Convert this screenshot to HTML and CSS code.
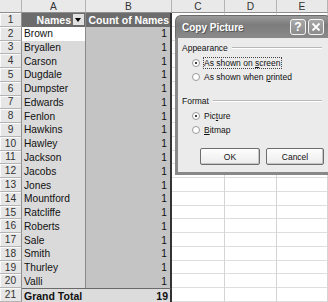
FILE: index.html
```
<!DOCTYPE html>
<html lang="en">
<head>
  <meta charset="UTF-8">
  <title>Copy Picture</title>
  <link rel="stylesheet" href="styles.css">
</head>
<body>
  <div class="sheet">
    <div class="hd"></div><div class="hd">A</div><div class="hd">B</div><div class="hd">C</div><div class="hd">D</div><div class="hd">E</div>

    <div class="rh">1</div>
    <div class="ph ph-a">Names <span class="drop"></span></div>
    <div class="ph ph-b">Count of Names</div>
    <div class="c"></div><div class="c"></div><div class="c"></div>

    <div class="rh">2</div><div class="ca sel">Brown</div><div class="cb">1</div><div class="c"></div><div class="c"></div><div class="c"></div>
    <div class="rh">3</div><div class="ca">Bryallen</div><div class="cb">1</div><div class="c"></div><div class="c"></div><div class="c"></div>
    <div class="rh">4</div><div class="ca">Carson</div><div class="cb">1</div><div class="c"></div><div class="c"></div><div class="c"></div>
    <div class="rh">5</div><div class="ca">Dugdale</div><div class="cb">1</div><div class="c"></div><div class="c"></div><div class="c"></div>
    <div class="rh">6</div><div class="ca">Dumpster</div><div class="cb">1</div><div class="c"></div><div class="c"></div><div class="c"></div>
    <div class="rh">7</div><div class="ca">Edwards</div><div class="cb">1</div><div class="c"></div><div class="c"></div><div class="c"></div>
    <div class="rh">8</div><div class="ca">Fenlon</div><div class="cb">1</div><div class="c"></div><div class="c"></div><div class="c"></div>
    <div class="rh">9</div><div class="ca">Hawkins</div><div class="cb">1</div><div class="c"></div><div class="c"></div><div class="c"></div>
    <div class="rh">10</div><div class="ca">Hawley</div><div class="cb">1</div><div class="c"></div><div class="c"></div><div class="c"></div>
    <div class="rh">11</div><div class="ca">Jackson</div><div class="cb">1</div><div class="c"></div><div class="c"></div><div class="c"></div>
    <div class="rh">12</div><div class="ca">Jacobs</div><div class="cb">1</div><div class="c"></div><div class="c"></div><div class="c"></div>
    <div class="rh">13</div><div class="ca">Jones</div><div class="cb">1</div><div class="c"></div><div class="c"></div><div class="c"></div>
    <div class="rh">14</div><div class="ca">Mountford</div><div class="cb">1</div><div class="c"></div><div class="c"></div><div class="c"></div>
    <div class="rh">15</div><div class="ca">Ratcliffe</div><div class="cb">1</div><div class="c"></div><div class="c"></div><div class="c"></div>
    <div class="rh">16</div><div class="ca">Roberts</div><div class="cb">1</div><div class="c"></div><div class="c"></div><div class="c"></div>
    <div class="rh">17</div><div class="ca">Sale</div><div class="cb">1</div><div class="c"></div><div class="c"></div><div class="c"></div>
    <div class="rh">18</div><div class="ca">Smith</div><div class="cb">1</div><div class="c"></div><div class="c"></div><div class="c"></div>
    <div class="rh">19</div><div class="ca">Thurley</div><div class="cb">1</div><div class="c"></div><div class="c"></div><div class="c"></div>
    <div class="rh">20</div><div class="ca">Valli</div><div class="cb">1</div><div class="c"></div><div class="c"></div><div class="c"></div>

    <div class="rh">21</div>
    <div class="gt gt-a">Grand Total</div>
    <div class="gt gt-b">19</div>
    <div class="c"></div><div class="c"></div><div class="c"></div>
  </div>

  <div class="dlg">
    <div class="titlebar">
      <span class="title">Copy Picture</span>
      <span class="tbtn">?</span>
      <span class="tbtn">
        <svg width="10" height="10" viewBox="0 0 10 10"><path d="M1.5 1.5 L8.5 8.5 M8.5 1.5 L1.5 8.5" stroke="#fff" stroke-width="1.8"/></svg>
      </span>
    </div>
    <div class="dlg-body">
      <div class="group"><span>Appearance</span></div>
      <div class="radio on"><i></i><span class="focus">As shown on <u>s</u>creen</span></div>
      <div class="radio"><i></i><span>As shown when <u>p</u>rinted</span></div>

      <div class="group group-2"><span>Format</span></div>
      <div class="radio on"><i></i><span>Pic<u>t</u>ure</span></div>
      <div class="radio"><i></i><span><u>B</u>itmap</span></div>

      <div class="buttons">
        <button class="btn btn-ok">OK</button>
        <button class="btn btn-cancel">Cancel</button>
      </div>
    </div>
  </div>
</body>
</html>
```

FILE: styles.css
```
body {
  margin: 0;
  width: 328px;
  height: 302px;
  overflow: hidden;
  background: #fff;
  font-family: "Liberation Sans", Arial, sans-serif;
  position: relative;
}
.sheet {
  display: grid;
  grid-template-columns: 22px 64px 86px 53px 52px 51px;
  grid-template-rows: 13px repeat(21, 1fr);
  height: 302px;
  font-size: 10.2px;
  color: #111;
}
.sheet > div {
  box-sizing: border-box;
  display: flex;
  align-items: center;
  white-space: nowrap;
  overflow: hidden;
}
.hd {
  background: #e9e9e9;
  border-right: 1px solid #b4b4b4;
  border-bottom: 1px solid #8e8e8e;
  justify-content: center;
  color: #333;
}
.rh {
  background: #e6e6e6;
  border-right: 1px solid #8e8e8e;
  border-bottom: 1px solid #b4b4b4;
  box-shadow: inset 1px 1px #fafafa;
  justify-content: center;
  color: #333;
}
.ca {
  background: #dadada;
  padding-left: 2px;
  border-right: 1px solid #8a8a8a;
}
.ca.sel {
  background: #fff;
}
.cb {
  background: #c4c4c4;
  justify-content: flex-end;
  padding-right: 3px;
  border-right: 2px solid #333;
}
.c {
  background: #fff;
  border-right: 1px solid #d4d4d4;
  border-bottom: 1px solid #dedede;
}
.ph {
  background: #6c6c6c;
  color: #fff;
  font-weight: bold;
  font-size: 10.5px;
  justify-content: flex-end;
}
.ph-a {
  padding-right: 1px;
  border-right: 1px solid #8a8a8a;
}
.ph-b {
  padding-right: 1px;
  border-right: 2px solid #333;
}
.drop {
  width: 11px;
  height: 11px;
  margin-left: 2px;
  background: #e2e2e2;
  position: relative;
}
.drop::after {
  content: "";
  position: absolute;
  left: 2px;
  top: 4px;
  border-left: 3.5px solid transparent;
  border-right: 3.5px solid transparent;
  border-top: 4px solid #000;
}
.gt {
  background: #dcdcdc;
  border-top: 1px solid #6a6a6a;
  font-weight: bold;
  font-size: 10.5px;
}
.gt-a {
  padding-left: 2px;
}
.gt-b {
  justify-content: flex-end;
  padding-right: 2px;
  border-right: 2px solid #333;
}

/* dialog on top of the sheet */
.dlg {
  position: absolute;
  left: 175px;
  top: 15px;
  width: 156px;
  height: 160px;
  display: flex;
  flex-direction: column;
  font-size: 8.5px;
  color: #111;
}
.titlebar {
  height: 22px;
  flex: none;
  display: flex;
  align-items: center;
  gap: 2px;
  padding: 0 6px 0 6px;
  border-radius: 6px 6px 0 0;
  background: linear-gradient(#9a9a9a, #7c7c7c 40%, #8a8a8a);
  border: 1px solid #6a6a6a;
  border-bottom: none;
}
.title {
  flex: 1;
  color: #fff;
  font-weight: bold;
  font-size: 10px;
  text-shadow: 1px 1px #555;
}
.tbtn {
  width: 16px;
  height: 16px;
  box-sizing: border-box;
  border: 1px solid #f4f4f4;
  border-radius: 3px;
  background: linear-gradient(#a8a8a8, #8c8c8c);
  color: #fff;
  font-weight: bold;
  font-size: 12px;
  display: flex;
  align-items: center;
  justify-content: center;
}
.tbtn + .tbtn {
  margin-left: 0;
}
.dlg-body {
  flex: 1;
  background: #ebebeb;
  border: 3px solid #888;
  border-top: none;
  padding: 5px 0 0 4px;
}
.group {
  display: flex;
  align-items: center;
  height: 10px;
  gap: 4px;
  padding-right: 6px;
}
.group::after {
  content: "";
  flex: 1;
  border-top: 1px solid #b8b8b8;
  border-bottom: 1px solid #fff;
}
.group-2 {
  margin-top: 12px;
}
.radio {
  display: flex;
  align-items: center;
  height: 14px;
  padding-left: 10px;
  gap: 4px;
}
.group + .radio {
  margin-top: 3px;
}
.radio i {
  width: 8px;
  height: 8px;
  box-sizing: border-box;
  border-radius: 50%;
  border: 1px solid #9a9a9a;
  background: #fff;
  position: relative;
}
.radio.on i::after {
  content: "";
  position: absolute;
  left: 2px;
  top: 2px;
  width: 2px;
  height: 2px;
  border-radius: 50%;
  background: #000;
}
.focus {
  outline: 1px dotted #444;
}
.buttons {
  display: flex;
  justify-content: flex-end;
  gap: 6px;
  margin-top: 11px;
  padding-right: 4px;
}
.btn {
  height: 17px;
  padding: 0;
  font-family: inherit;
  font-size: 8.5px;
  color: #111;
  background: linear-gradient(#fdfdfd, #ececec);
  border: 1px solid #6e6e6e;
  border-radius: 2px;
  box-shadow: inset -1px -1px #c4c4c4;
}
.btn-ok {
  width: 60px;
}
.btn-cancel {
  width: 58px;
}
```
